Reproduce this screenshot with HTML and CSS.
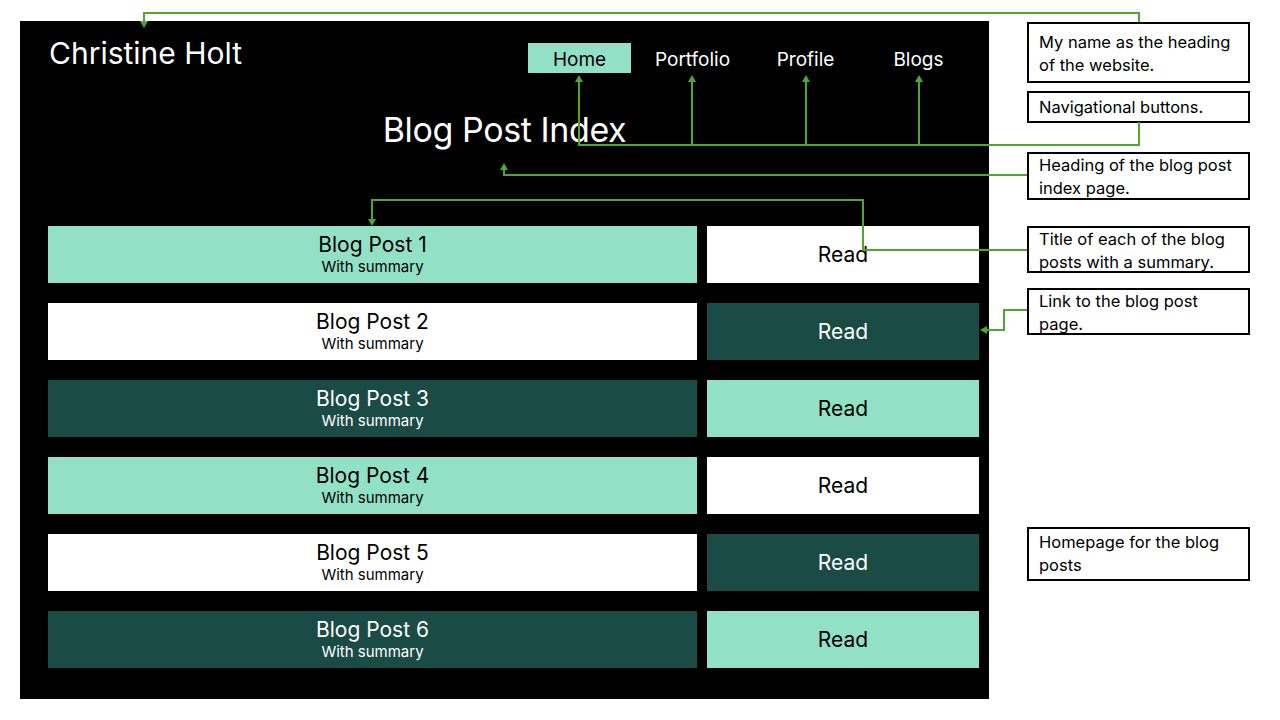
FILE: index.html
```html
<!DOCTYPE html>
<html lang="en">
<head>
<meta charset="utf-8">
<title>Blog Post Index</title>
<link rel="stylesheet" href="styles.css">
</head>
<body>
<div class="canvas">
  <main class="panel">
    <header class="top">
      <div class="name">Christine Holt</div>
      <nav class="nav">
        <a class="nav-item active">Home</a>
        <a class="nav-item">Portfolio</a>
        <a class="nav-item">Profile</a>
        <a class="nav-item">Blogs</a>
      </nav>
    </header>
    <h1 class="title">Blog Post Index</h1>
    <section class="posts">
      <div class="row">
        <div class="post mint"><span class="post-title">Blog Post 1</span><span class="post-sum">With summary</span></div>
        <div class="read white">Read</div>
      </div>
      <div class="row">
        <div class="post white"><span class="post-title">Blog Post 2</span><span class="post-sum">With summary</span></div>
        <div class="read dark">Read</div>
      </div>
      <div class="row">
        <div class="post dark"><span class="post-title">Blog Post 3</span><span class="post-sum">With summary</span></div>
        <div class="read mint">Read</div>
      </div>
      <div class="row">
        <div class="post mint"><span class="post-title">Blog Post 4</span><span class="post-sum">With summary</span></div>
        <div class="read white">Read</div>
      </div>
      <div class="row">
        <div class="post white"><span class="post-title">Blog Post 5</span><span class="post-sum">With summary</span></div>
        <div class="read dark">Read</div>
      </div>
      <div class="row">
        <div class="post dark"><span class="post-title">Blog Post 6</span><span class="post-sum">With summary</span></div>
        <div class="read mint">Read</div>
      </div>
    </section>
  </main>

  <div class="note note-1">My name as the heading of the website.</div>
  <div class="note note-2">Navigational buttons.</div>
  <div class="note note-3">Heading of the blog post index page.</div>
  <div class="note note-4">Title of each of the blog posts with a summary.</div>
  <div class="note note-5">Link to the blog post page.</div>
  <div class="note note-6">Homepage for the blog posts</div>

  <svg class="connectors" width="1280" height="720" viewBox="0 0 1280 720" xmlns="http://www.w3.org/2000/svg">
    <g fill="none" stroke="#4ea72e" stroke-width="2">
      <path d="M1139 22 V13 H144 V22"/>
      <path d="M1139 122 V145 H579 V81"/>
      <path d="M692 145 V81"/>
      <path d="M806 145 V81"/>
      <path d="M919 145 V81"/>
      <path d="M1027 175 H504 V169"/>
      <path d="M1027 250 H863 V200 H372 V219"/>
      <path d="M1027 310 H1004 V330 H986"/>
    </g>
    <g fill="#4ea72e">
      <polygon points="140,21 148,21 144,28"/>
      <polygon points="575,82 583,82 579,75"/>
      <polygon points="688,82 696,82 692,75"/>
      <polygon points="802,82 810,82 806,75"/>
      <polygon points="915,82 923,82 919,75"/>
      <polygon points="500,170 508,170 504,163"/>
      <polygon points="368,219 376,219 372,226"/>
      <polygon points="987,326 987,334 980,330"/>
    </g>
  </svg>
</div>
</body>
</html>
```

FILE: styles.css
```css
* { box-sizing: border-box; }

html, body {
  margin: 0;
  padding: 0;
  background: #ffffff;
}

body {
  font-family: "Inter", "Open Sans", "Liberation Sans", sans-serif;
  color: #000;
}

.canvas {
  position: relative;
  width: 1280px;
  height: 720px;
  padding: 21px 0 0 20px;
}

.panel {
  width: 969px;
  height: 678px;
  background: #000;
  display: flex;
  flex-direction: column;
  padding: 0 10px 0 28px;
}

.top {
  display: flex;
  justify-content: space-between;
  align-items: flex-start;
  height: 70px;
}

.name {
  color: #fff;
  font-size: 30px;
  font-weight: 400;
  letter-spacing: 0;
  margin: 15px 0 0 1px;
  line-height: 34px;
}

.nav {
  display: flex;
  gap: 10px;
  margin: 22px 9px 0 0;
}

.nav-item {
  width: 103px;
  height: 30px;
  display: flex;
  align-items: center;
  justify-content: center;
  color: #fff;
  font-size: 19px;
  line-height: 30px;
  padding-top: 3px;
}

.nav-item.active {
  background: #92e1c7;
  color: #000;
}

.title {
  margin: 20px 0 0 -28px;
  width: 969px;
  text-align: center;
  color: #fff;
  font-size: 34px;
  font-weight: 400;
  line-height: 38px;
  letter-spacing: -0.4px;
}

.posts {
  display: flex;
  flex-direction: column;
  gap: 20px;
  margin-top: 77px;
}

.row {
  display: flex;
  gap: 10px;
  height: 57px;
}

.post {
  width: 649px;
  display: flex;
  flex-direction: column;
  align-items: center;
  justify-content: center;
}

.post-title {
  font-size: 21px;
  line-height: 25px;
}

.post-sum {
  font-size: 15px;
  line-height: 20px;
}

.read {
  width: 272px;
  display: flex;
  align-items: center;
  justify-content: center;
  font-size: 21px;
}

.mint { background: #92e1c7; color: #000; }
.white { background: #ffffff; color: #000; }
.dark { background: #1a4b44; color: #fff; }

.note {
  position: absolute;
  left: 1027px;
  width: 223px;
  border: 2px solid #000;
  background: #fff;
  font-size: 16.5px;
  line-height: 23px;
  padding: 7px 6px 0 10px;
  color: #000;
}

.note-1 { top: 22px; height: 61px; }
.note-2 { top: 91px; height: 32px; padding-top: 3px; }
.note-3 { top: 152px; height: 48px; padding-top: 0; }
.note-4 { top: 226px; height: 47px; padding-top: 0; }
.note-5 { top: 288px; height: 47px; padding-top: 0; }
.note-6 { top: 527px; height: 54px; padding-top: 2px; }

.connectors {
  position: absolute;
  top: 0;
  left: 0;
  pointer-events: none;
}
```
